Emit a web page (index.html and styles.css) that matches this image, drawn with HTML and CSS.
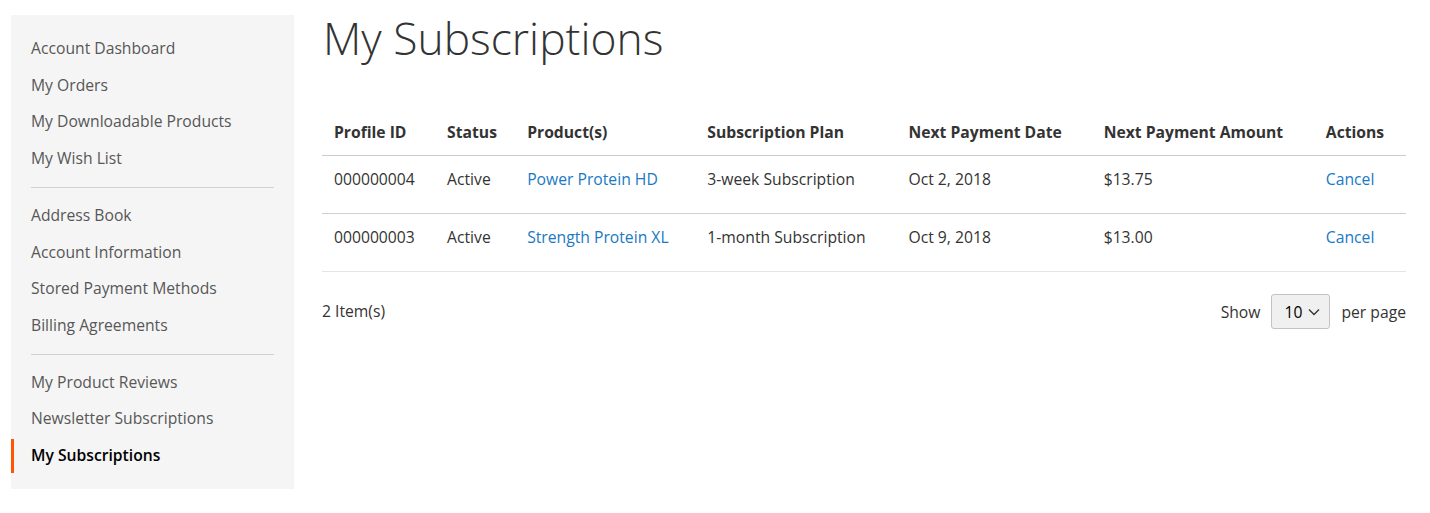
FILE: index.html
```html
<!DOCTYPE html>
<html lang="en">
<head>
  <meta charset="UTF-8">
  <title>My Subscriptions</title>
  <link rel="stylesheet" href="styles.css">
</head>
<body>
  <div class="page">
    <div class="sidebar">
      <ul class="nav">
        <li class="nav-item"><a href="#">Account Dashboard</a></li>
        <li class="nav-item"><a href="#">My Orders</a></li>
        <li class="nav-item"><a href="#">My Downloadable Products</a></li>
        <li class="nav-item"><a href="#">My Wish List</a></li>
        <li class="nav-delimiter"></li>
        <li class="nav-item"><a href="#">Address Book</a></li>
        <li class="nav-item"><a href="#">Account Information</a></li>
        <li class="nav-item"><a href="#">Stored Payment Methods</a></li>
        <li class="nav-item"><a href="#">Billing Agreements</a></li>
        <li class="nav-delimiter"></li>
        <li class="nav-item"><a href="#">My Product Reviews</a></li>
        <li class="nav-item"><a href="#">Newsletter Subscriptions</a></li>
        <li class="nav-item current"><strong>My Subscriptions</strong></li>
      </ul>
    </div>

    <div class="main">
      <h1 class="page-title">My Subscriptions</h1>

      <table class="subs-table">
        <colgroup>
          <col class="col-id">
          <col class="col-status">
          <col class="col-product">
          <col class="col-plan">
          <col class="col-date">
          <col class="col-amount">
          <col class="col-actions">
        </colgroup>
        <thead>
          <tr>
            <th>Profile ID</th>
            <th>Status</th>
            <th>Product(s)</th>
            <th>Subscription Plan</th>
            <th>Next Payment Date</th>
            <th>Next Payment Amount</th>
            <th>Actions</th>
          </tr>
        </thead>
        <tbody>
          <tr>
            <td>000000004</td>
            <td>Active</td>
            <td><a href="#">Power Protein HD</a></td>
            <td>3-week Subscription</td>
            <td>Oct 2, 2018</td>
            <td>$13.75</td>
            <td><a href="#">Cancel</a></td>
          </tr>
          <tr>
            <td>000000003</td>
            <td>Active</td>
            <td><a href="#">Strength Protein XL</a></td>
            <td>1-month Subscription</td>
            <td>Oct 9, 2018</td>
            <td>$13.00</td>
            <td><a href="#">Cancel</a></td>
          </tr>
        </tbody>
      </table>

      <div class="toolbar">
        <div class="amount">2 Item(s)</div>
        <div class="limiter">
          <span>Show</span>
          <div class="select">
            <span>10</span>
            <svg width="12" height="8" viewBox="0 0 12 8"><path d="M1 1.5 L6 6.5 L11 1.5" fill="none" stroke="#333" stroke-width="1.3"/></svg>
          </div>
          <span>per page</span>
        </div>
      </div>
    </div>
  </div>
</body>
</html>
```

FILE: styles.css
```css
* {
  box-sizing: border-box;
}

body {
  margin: 0;
  font-family: "Open Sans", "Liberation Sans", sans-serif;
  font-size: 15.7px;
  color: #333;
  background: #fff;
}

a {
  color: #1979c3;
  text-decoration: none;
}

.page {
  display: flex;
  align-items: flex-start;
  padding: 15px 24px 0 11px;
  gap: 28px;
}

/* sidebar */
.sidebar {
  width: 283px;
  flex-shrink: 0;
  background: #f5f5f5;
  padding: 14px 0 16px;
}

.nav {
  list-style: none;
  margin: 0;
  padding: 0;
}

.nav-item {
  margin-top: 3px;
}

.nav-item a,
.nav-item strong {
  display: block;
  padding: 5px 18px 5px 17px;
  line-height: 23.7px;
  border-left: 3px solid transparent;
  color: #575757;
}

.nav-item.current strong {
  border-left-color: #ff5501;
  color: #000;
  font-weight: 600;
}

.nav-delimiter {
  border-top: 1px solid #d1d1d1;
  margin: 11px 20px 11px;
}

/* main column */
.main {
  flex: 1;
}

.page-title {
  margin: 0;
  font-size: 44.4px;
  font-weight: 300;
  line-height: 52px;
  color: #333;
  margin-top: -3px;
  padding-left: 1px;
}

.subs-table {
  width: 100%;
  border-collapse: collapse;
  table-layout: fixed;
  margin-top: 49px;
}

.col-id { width: 113px; }
.col-status { width: 80px; }
.col-product { width: 180px; }
.col-plan { width: 201px; }
.col-date { width: 195px; }
.col-amount { width: 222px; }
.col-actions { width: 92px; }

.subs-table th {
  text-align: left;
  font-weight: 700;
  padding: 8px 12px 11px;
  line-height: 23px;
  border-bottom: 1px solid #ccc;
  white-space: nowrap;
}

.subs-table td {
  padding: 12px 12px 22px;
  line-height: 23px;
  border-bottom: 1px solid #d1d1d1;
  white-space: nowrap;
}

.subs-table tbody tr:last-child td {
  border-bottom-color: #e4e4e4;
}

.toolbar {
  display: flex;
  justify-content: space-between;
  align-items: center;
  margin-top: 22px;
}

.amount {
  margin-top: -2px;
}

.limiter {
  display: flex;
  align-items: center;
  gap: 11px;
}

.select {
  display: flex;
  align-items: center;
  gap: 6px;
  width: 59px;
  height: 35px;
  padding: 0 0 0 12px;
  background: #f0f0f0;
  border: 1px solid #c2c2c2;
  border-radius: 3px;
  color: #000;
}
```
